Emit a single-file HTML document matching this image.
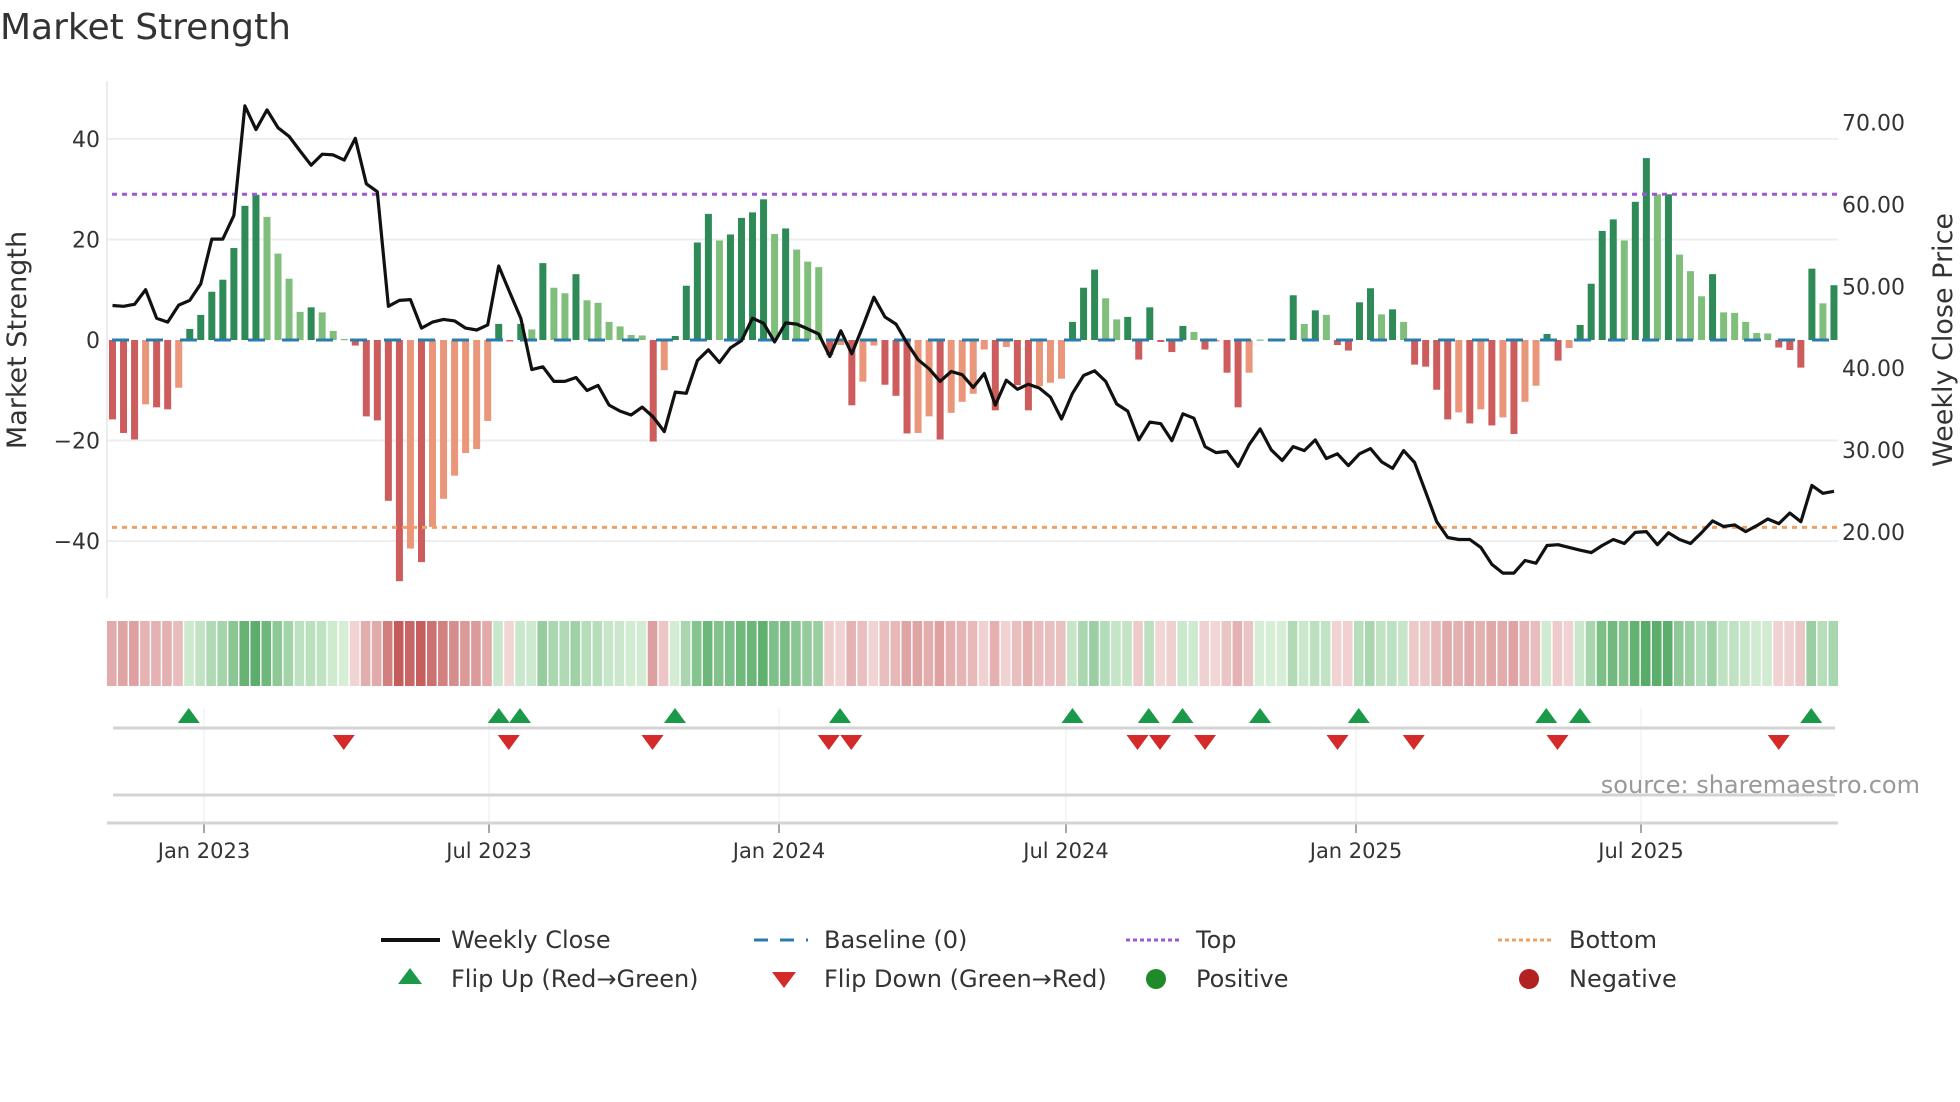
<!DOCTYPE html>
<html><head><meta charset="utf-8"><style>
html,body{margin:0;padding:0;background:#fff;width:1960px;height:1102px;overflow:hidden}
svg text{font-family:"DejaVu Sans","Liberation Sans",sans-serif;fill:#333}
</style></head><body>
<svg id="s" width="1960" height="1102" viewBox="0 0 1960 1102" xmlns="http://www.w3.org/2000/svg">
<text x="0" y="39" font-size="36">Market Strength</text>
<g id="g"></g>
<text transform="translate(26,340) rotate(-90)" text-anchor="middle" font-size="27">Market Strength</text>
<text transform="translate(1952,340) rotate(-90)" text-anchor="middle" font-size="27">Weekly Close Price</text>
<text x="1920" y="793" text-anchor="end" font-size="24" style="fill:#999">source: sharemaestro.com</text>
<line x1="381" y1="940" x2="440" y2="940" stroke="#111" stroke-width="4"/>
<text x="451" y="948" font-size="24">Weekly Close</text>
<line x1="754" y1="940" x2="808" y2="940" stroke="#2b7bab" stroke-width="3" stroke-dasharray="14,12"/>
<text x="824" y="948" font-size="24">Baseline (0)</text>
<line x1="1126" y1="940" x2="1182" y2="940" stroke="#9b59d6" stroke-width="3" stroke-dasharray="4,3"/>
<text x="1196" y="948" font-size="24">Top</text>
<line x1="1498" y1="940" x2="1554" y2="940" stroke="#f0a060" stroke-width="3" stroke-dasharray="4,3"/>
<text x="1569" y="948" font-size="24">Bottom</text>
<polygon points="410,968 422,984 398,984" fill="#1a9a48"/>
<text x="451" y="987" font-size="24">Flip Up (Red→Green)</text>
<polygon points="772,972 796,972 784,988" fill="#d42a2a"/>
<text x="824" y="987" font-size="24">Flip Down (Green→Red)</text>
<circle cx="1156" cy="979" r="10" fill="#1e8a2a"/>
<text x="1196" y="987" font-size="24">Positive</text>
<circle cx="1529" cy="979" r="10" fill="#b22222"/>
<text x="1569" y="987" font-size="24">Negative</text>
</svg>
<script>
var B=[[-15.8,1],[-18.5,1],[-19.8,1],[-12.8,0],[-13.4,1],[-13.8,1],[-9.5,0],[2.2,1],[5,1],[9.6,1],[12,1],[18.3,1],[26.7,1],[28.9,1],[24.5,0],[17.2,0],[12.2,0],[5.6,0],[6.5,1],[5.5,0],[1.8,0],[0.2,0],[-1.1,1],[-15.2,1],[-16,1],[-32,1],[-48,1],[-41.5,0],[-44.2,1],[-37.2,0],[-31.6,0],[-27,0],[-22.5,0],[-21.7,0],[-16.1,0],[3.2,1],[-0.3,1],[3.2,1],[2.1,0],[15.3,1],[10.4,0],[9.3,0],[13.1,1],[7.9,0],[7.4,0],[3.6,0],[2.7,0],[1,0],[0.9,0],[-20.2,1],[-6,0],[0.8,1],[10.8,1],[19.4,1],[25.1,1],[19.8,0],[21,1],[24.3,1],[25.4,1],[28,1],[21.1,0],[22.2,1],[18,0],[15.6,0],[14.5,0],[-3,1],[-1,0],[-13,1],[-8.3,0],[-1.1,0],[-8.9,1],[-11.1,1],[-18.6,1],[-18.5,0],[-15.2,0],[-19.8,1],[-14.5,0],[-12.3,0],[-10.7,0],
[-1.9,0],[-14,1],[-1.4,0],[-9,1],[-14,1],[-9.2,0],[-8.5,0],[-7.7,0],[3.6,1],[10.4,1],[14,1],[8.3,0],[4.1,0],[4.6,1],[-3.9,1],[6.5,1],[-0.4,1],[-2.4,1],[2.8,1],[1.6,0],[-1.9,1],[-0.3,0],[-6.5,1],[-13.4,1],[-6.5,0],[0.1,0],[0.1,1],[0.2,1],[8.9,1],[3.2,0],[5.9,1],[5,0],[-1,1],[-2.1,1],[7.5,1],[10.3,1],[5.1,0],[6.1,1],[3.6,0],[-4.9,1],[-5.3,1],[-9.9,1],[-15.8,1],[-14.4,0],[-16.6,1],[-13.8,0],[-17,1],[-15.4,0],[-18.7,1],[-12.3,0],[-9.1,0],[1.2,1],[-4.1,1],[-1.6,0],[3,1],[11.2,1],[21.7,1],[24,1],[19.8,0],[27.5,1],[36.2,1],[29,0],[29,1],[17,0],[13.7,0],[8.7,0],[13.1,1],[5.5,0],[5.4,0],[3.6,0],[1.4,0],[1.3,0],[-1.5,1],[-2,1],[-5.5,1],[14.2,1],[7.3,0],[10.9,1]];
var P=[773,775,770,733,805,815,772,760,718,605,605,545,268,328,278,323,345,382,418,390,392,405,350,465,485,775,760,758,830,815,808,812,830,835,822,673,740,805,935,928,965,965,955,988,975,1025,1040,1050,1030,1055,1092,992,995,912,885,917,880,862,805,818,865,817,820,832,845,902,837,895,825,752,802,820,868,910,933,965,940,948,980,
945,1025,962,985,972,982,1005,1060,995,950,938,965,1022,1040,1113,1068,1072,1115,1047,1058,1130,1145,1142,1180,1125,1085,1138,1165,1130,1140,1113,1160,1148,1178,1148,1135,1168,1185,1140,1170,1245,1320,1360,1365,1365,1385,1428,1450,1450,1418,1425,1380,1378,1385,1392,1398,1380,1365,1375,1347,1345,1378,1348,1365,1375,1348,1318,1332,1328,1345,1330,1313,1325,1298,1320,1228,1248,1243];
var h='';
function X(i){return 112.5+i*11.035;}
var Z=340,K=5.025;
[40,20,0,-20,-40].forEach(function(v){var y=Z-v*K;if(v!==0)h+='<line x1="107" x2="1838" y1="'+y+'" y2="'+y+'" stroke="#eeeeee" stroke-width="2"/>';
h+='<text x="100" y="'+(y+8)+'" text-anchor="end" font-size="22">'+(v<0?'\u2212'+(-v):v)+'</text>';});
[70,60,50,40,30,20].forEach(function(p){var y=122.5+(70-p)*8.19;h+='<text x="1842" y="'+(y+8)+'" font-size="22">'+p+'.00</text>';});
h+='<line x1="107" x2="107" y1="81" y2="598" stroke="#e6e6e6" stroke-width="1.5"/>';
B.forEach(function(b,i){var v=b[0],d=b[1];var c=v>=0?(d?'#2e8a57':'#7fbf7b'):(d?'#cd5c5c':'#e9967a');
var y=v>=0?Z-v*K:Z,hh=Math.max(Math.abs(v)*K,1.2);h+='<rect x="'+(X(i)-3.5)+'" y="'+y+'" width="7" height="'+hh+'" fill="'+c+'"/>';});
h+='<line x1="112" x2="1838" y1="'+Z+'" y2="'+Z+'" stroke="#2b7bab" stroke-width="3" stroke-dasharray="17,17"/>';
h+='<line x1="112" x2="1838" y1="'+(Z-29*K)+'" y2="'+(Z-29*K)+'" stroke="#9b59d6" stroke-width="3" stroke-dasharray="5,5"/>';
h+='<line x1="112" x2="1838" y1="'+(Z+37.3*K)+'" y2="'+(Z+37.3*K)+'" stroke="#f0a060" stroke-width="3" stroke-dasharray="5,5"/>';
var pts=P.map(function(z,i){return X(i).toFixed(1)+','+(z/2.53).toFixed(1);}).join(' ');
h+='<polyline points="'+pts+'" fill="none" stroke="#111" stroke-width="3.2" stroke-linejoin="round"/>';
function mix(a,b,t){var r='#';for(var k=0;k<3;k++){var x=Math.round(a[k]+(b[k]-a[k])*t);r+=('0'+x.toString(16)).slice(-2);}return r;}
B.forEach(function(b,i){var v=b[0],t=Math.min(Math.abs(v)/45,1);var c=v>=0?mix([214,238,214],[88,172,104],Math.min(v/30,1)):mix([242,214,214],[196,92,92],t);
h+='<rect x="'+(X(i)-5.5)+'" y="621" width="9.6" height="65" fill="'+c+'"/>';});
var T=[[204,'Jan 2023'],[489,'Jul 2023'],[779,'Jan 2024'],[1066,'Jul 2024'],[1356,'Jan 2025'],[1641,'Jul 2025']];
T.forEach(function(t){h+='<line x1="'+t[0]+'" x2="'+t[0]+'" y1="708" y2="823" stroke="#eef2f4" stroke-width="1.5"/>';
h+='<line x1="'+t[0]+'" x2="'+t[0]+'" y1="823" y2="833" stroke="#888" stroke-width="1.5"/>';
h+='<text x="'+t[0]+'" y="858" text-anchor="middle" font-size="21">'+t[1]+'</text>';});
h+='<line x1="113" x2="1835" y1="728" y2="728" stroke="#d3d3d3" stroke-width="3"/>';
h+='<line x1="113" x2="1835" y1="795" y2="795" stroke="#d3d3d3" stroke-width="3"/>';
h+='<line x1="107" x2="1838" y1="823" y2="823" stroke="#d3d3d3" stroke-width="3"/>';
[151,399,416,540,672,858,919,946,1008,1087,1237,1264,1449].forEach(function(x){x*=1.25;h+='<polygon points="'+x+',708 '+(x+11)+',723 '+(x-11)+',723" fill="#1a9a48"/>';});
[275,407,522,663,681,910,928,964,1070,1131,1246,1423].forEach(function(x){x*=1.25;h+='<polygon points="'+(x-11)+',735 '+(x+11)+',735 '+x+',750" fill="#d42a2a"/>';});
document.getElementById('g').innerHTML=h;
</script>
</body></html>
